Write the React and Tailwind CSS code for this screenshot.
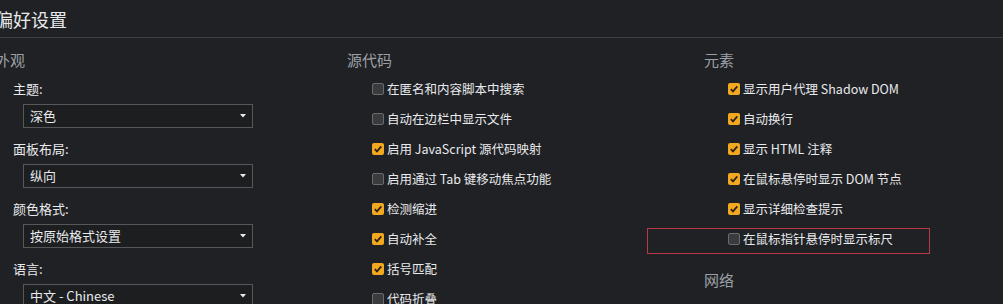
import React from 'react'

const font = { fontFamily: '"Noto Sans CJK SC", "Noto Sans", sans-serif' }

const selects = [
  { label: '主题:', value: '深色' },
  { label: '面板布局:', value: '纵向' },
  { label: '颜色格式:', value: '按原始格式设置' },
  { label: '语言:', value: '中文 - Chinese' },
]

const sources = [
  { text: '在匿名和内容脚本中搜索', on: false },
  { text: '自动在边栏中显示文件', on: false },
  { text: '启用 JavaScript 源代码映射', on: true },
  { text: '启用通过 Tab 键移动焦点功能', on: false },
  { text: '检测缩进', on: true },
  { text: '自动补全', on: true },
  { text: '括号匹配', on: true },
  { text: '代码折叠', on: false },
]

const elements = [
  { text: '显示用户代理 Shadow DOM', on: true },
  { text: '自动换行', on: true },
  { text: '显示 HTML 注释', on: true },
  { text: '在鼠标悬停时显示 DOM 节点', on: true },
  { text: '显示详细检查提示', on: true },
  { text: '在鼠标指针悬停时显示标尺', on: false, marked: true },
]

function Box({ on }) {
  if (on) {
    return (
      <span className="w-[12px] h-[12px] rounded-[2px] bg-[#f2a91f] flex items-center justify-center shrink-0">
        <svg width="10" height="10" viewBox="0 0 10 10">
          <path d="M1.8 5.2 L4 7.4 L8.3 2.4" fill="none" stroke="#2a2118" strokeWidth="1.7" />
        </svg>
      </span>
    )
  }
  return <span className="w-[12px] h-[12px] rounded-[2px] bg-[#3a3b3d] border border-[#6a6b6d] shrink-0" />
}

function CheckRow({ item }) {
  return (
    <div className="relative h-[30px] flex items-center gap-[3px] text-[12.5px] text-[#e8eaed]">
      {item.marked && (
        <div className="absolute left-[-81px] top-[4px] w-[283px] h-[26px] border border-[#b8394a]" />
      )}
      <Box on={item.on} />
      <span className="whitespace-nowrap">{item.text}</span>
    </div>
  )
}

function Header({ children }) {
  return <div className="h-[16px] leading-[16px] text-[15px] text-[#9aa0a6] whitespace-nowrap">{children}</div>
}

export default function App() {
  return (
    <div className="w-[1003px] h-[304px] overflow-hidden bg-[#202124]" style={font}>
      <div className="h-[38px] border-b border-[#3f4144] flex items-center">
        <span className="ml-[-5px] text-[18px] text-[#e8eaed] leading-none">偏好设置</span>
      </div>
      <div className="grid grid-cols-[347px_357px_1fr] pt-[14px]">
        <div>
          <div className="ml-[-5px]">
            <Header>外观</Header>
          </div>
          <div className="pt-[12px]">
            {selects.map((s) => (
              <div key={s.label} className="h-[60px]">
                <div className="h-[18px] leading-[18px] pl-[13px] text-[13px] text-[#e8eaed]">{s.label}</div>
                <div className="mt-[6px] ml-[23px] w-[230px] h-[24px] border border-[#55575a] bg-[#1d1e20] flex items-center justify-between pl-[6px] pr-[6px]">
                  <span className="text-[13px] text-[#e8eaed]">{s.value}</span>
                  <svg width="6" height="4" viewBox="0 0 6 4">
                    <path d="M0 0 H6 L3 3.5 Z" fill="#e8eaed" />
                  </svg>
                </div>
              </div>
            ))}
          </div>
        </div>
        <div>
          <Header>源代码</Header>
          <div className="pt-[6px] pl-[25px]">
            {sources.map((it) => (
              <CheckRow key={it.text} item={it} />
            ))}
          </div>
        </div>
        <div>
          <Header>元素</Header>
          <div className="pt-[6px] pl-[24px]">
            {elements.map((it) => (
              <CheckRow key={it.text} item={it} />
            ))}
          </div>
          <div className="mt-[18px]">
            <Header>网络</Header>
          </div>
        </div>
      </div>
    </div>
  )
}
